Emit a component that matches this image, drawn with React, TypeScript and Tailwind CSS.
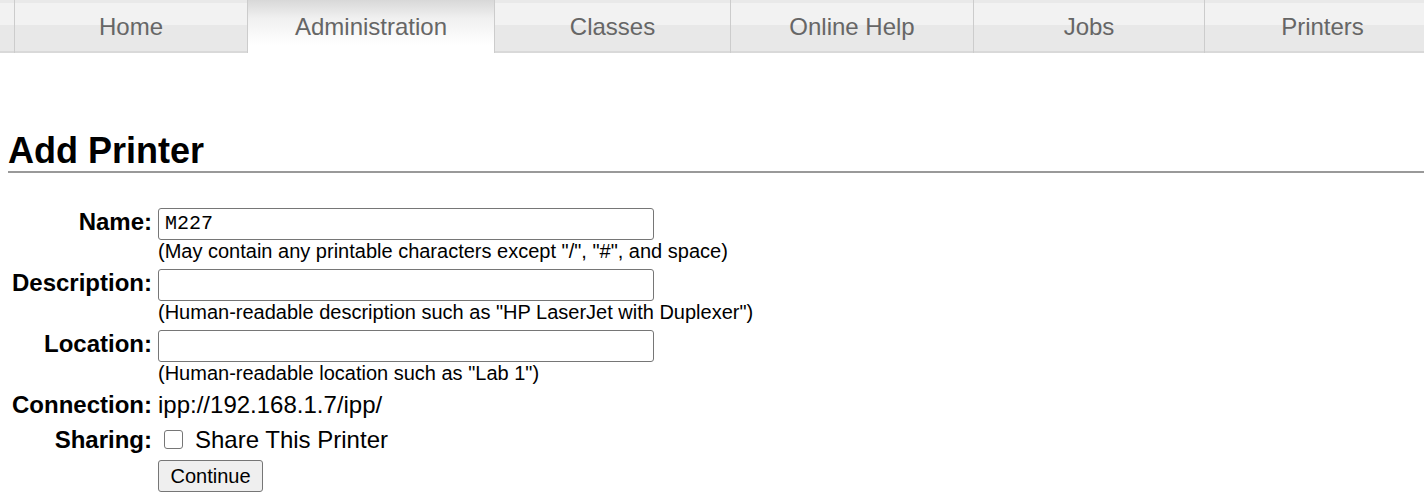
import React from "react";

const tabs = [
  { label: "", w: "w-[14px]", active: false },
  { label: "Home", w: "w-[233px]", active: false },
  { label: "Administration", w: "w-[247px]", active: true },
  { label: "Classes", w: "w-[236px]", active: false },
  { label: "Online Help", w: "w-[243px]", active: false },
  { label: "Jobs", w: "w-[231px]", active: false },
  { label: "Printers", w: "w-[236px]", active: false },
];

const inactiveBg =
  "bg-[linear-gradient(to_bottom,#e9e9e9_0px,#e9e9e9_3px,#f2f2f2_3px,#f2f2f2_25px,#e8e8e8_25px,#e8e8e8_51px,#d9d9d9_51px,#d9d9d9_53px)]";
const activeBg =
  "bg-[linear-gradient(to_bottom,#d8d8d8_0px,#f0f0f0_18px,#ffffff_45px,#ffffff_53px)]";

function Nav() {
  return (
    <div className="flex h-[53px] w-full overflow-hidden">
      {tabs.map((t, i) => (
        <div
          key={i}
          className={`${t.w} shrink-0 h-full flex items-center justify-center ${
            t.active ? activeBg : inactiveBg
          } ${i > 0 ? "border-l border-[#cccccc]" : ""}`}
        >
          <span className="text-[24px] leading-none text-[#666666] pt-[1px]">
            {t.label}
          </span>
        </div>
      ))}
    </div>
  );
}

function Label({ children, extra = "" }: { children: React.ReactNode; extra?: string }) {
  return (
    <div className={`text-right font-bold text-[24px] leading-[27px] text-black ${extra}`}>
      {children}
    </div>
  );
}

function TextField({ value }: { value?: string }) {
  return (
    <div className="w-[496px] h-[32px] border border-[#767676] rounded-[3px] bg-white flex items-center px-[6px] font-['Liberation_Mono',monospace] text-[20px] text-black">
      {value}
    </div>
  );
}

function Hint({ children }: { children: React.ReactNode }) {
  return <div className="text-[20px] leading-[23px] text-black">{children}</div>;
}

export default function App() {
  return (
    <div className="min-h-[503px] bg-white font-['Liberation_Sans',Arial,sans-serif] text-black">
      <Nav />
      <div className="pl-2">
        <h2 className="mt-[77px] text-[36px] font-bold leading-[41px] border-b-2 border-[#999999] pb-0">
          Add Printer
        </h2>
        <div className="mt-[35px] grid grid-cols-[144px_1fr] gap-x-[6px] gap-y-[6px]">
          <Label>Name:</Label>
          <div>
            <TextField value="M227" />
            <Hint>(May contain any printable characters except "/", "#", and space)</Hint>
          </div>
          <Label>Description:</Label>
          <div>
            <TextField />
            <Hint>(Human-readable description such as "HP LaserJet with Duplexer")</Hint>
          </div>
          <Label>Location:</Label>
          <div>
            <TextField />
            <Hint>(Human-readable location such as "Lab 1")</Hint>
          </div>
          <Label>Connection:</Label>
          <div className="text-[24px] leading-[27px]">ipp://192.168.1.7/ipp/</div>
          <Label extra="mt-[2px]">Sharing:</Label>
          <div className="mt-[2px] flex items-center h-[27px] text-[24px] leading-[27px]">
            <span className="ml-[6px] w-[19px] h-[19px] border border-[#767676] rounded-[3px] bg-white" />
            <span className="ml-[12px]">Share This Printer</span>
          </div>
          <div />
          <div className="pt-[1px]">
            <button className="w-[105px] h-[32px] border border-[#767676] rounded-[3px] bg-[#efefef] text-[20px] text-black">
              Continue
            </button>
          </div>
        </div>
      </div>
    </div>
  );
}
